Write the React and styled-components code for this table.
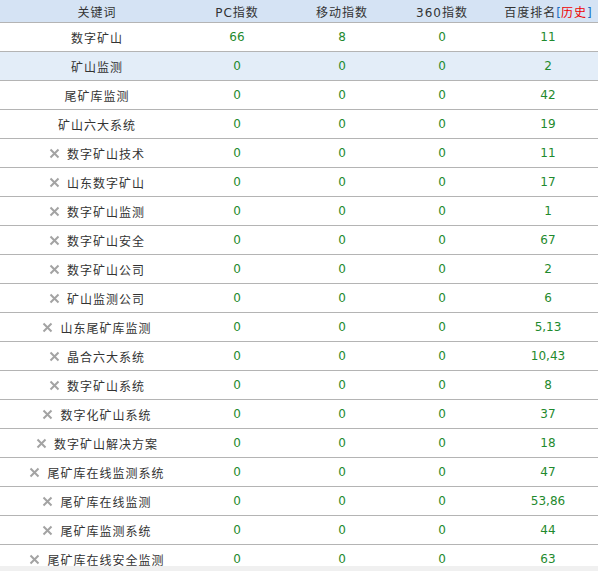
import styled, { createGlobalStyle } from "styled-components";

const GlobalStyle = createGlobalStyle`
  html, body {
    margin: 0;
    padding: 0;
    background: #f0f0f0;
  }
`;

const Frame = styled.div`
  width: 598px;
  height: 566px;
  overflow: hidden;
  background: #fff;
`;

const Table = styled.div`
  width: 616px;
  font-family: "DejaVu Sans", "Noto Sans CJK SC", sans-serif;
  font-size: 12px;
`;

const Row = styled.div`
  display: grid;
  grid-template-columns: 194px 86px 124px 76px 136px;
  height: ${(p) => (p.$head ? "22px" : "28px")};
  border-bottom: 1px solid #b4b4b4;
  background: ${(p) => (p.$head ? "#d5e3f4" : p.$active ? "#e3edf8" : "#fff")};
`;

const Cell = styled.div`
  display: flex;
  align-items: center;
  justify-content: center;
  gap: 7px;
  color: ${(p) => (p.$num ? "#1f8a2e" : "#333")};
`;

const HeadCell = styled(Cell)`
  color: #333;
`;

const Word = styled.span`
  letter-spacing: 1px;
`;

const History = styled.span`
  color: #e00;
`;

const Bracket = styled.span`
  color: #1a6fc4;
  letter-spacing: 0;
`;

const Remove = () => (
  <svg width="11" height="11" viewBox="0 0 11 11">
    <path d="M1.5 1.5 L9.5 9.5 M9.5 1.5 L1.5 9.5" stroke="#a3a3a3" strokeWidth="2" />
  </svg>
);

const rows = [
  ["数字矿山", "66", "8", "0", "11", false],
  ["矿山监测", "0", "0", "0", "2", false],
  ["尾矿库监测", "0", "0", "0", "42", false],
  ["矿山六大系统", "0", "0", "0", "19", false],
  ["数字矿山技术", "0", "0", "0", "11", true],
  ["山东数字矿山", "0", "0", "0", "17", true],
  ["数字矿山监测", "0", "0", "0", "1", true],
  ["数字矿山安全", "0", "0", "0", "67", true],
  ["数字矿山公司", "0", "0", "0", "2", true],
  ["矿山监测公司", "0", "0", "0", "6", true],
  ["山东尾矿库监测", "0", "0", "0", "5,13", true],
  ["晶合六大系统", "0", "0", "0", "10,43", true],
  ["数字矿山系统", "0", "0", "0", "8", true],
  ["数字化矿山系统", "0", "0", "0", "37", true],
  ["数字矿山解决方案", "0", "0", "0", "18", true],
  ["尾矿库在线监测系统", "0", "0", "0", "47", true],
  ["尾矿库在线监测", "0", "0", "0", "53,86", true],
  ["尾矿库监测系统", "0", "0", "0", "44", true],
  ["尾矿库在线安全监测", "0", "0", "0", "63", true],
];

export default function App() {
  return (
    <Frame>
      <GlobalStyle />
      <Table>
        <Row $head>
          <HeadCell><Word>关键词</Word></HeadCell>
          <HeadCell><Word>PC指数</Word></HeadCell>
          <HeadCell><Word>移动指数</Word></HeadCell>
          <HeadCell><Word>360指数</Word></HeadCell>
          <HeadCell>
            <Word>
              百度排名<Bracket>[</Bracket>
              <History>历史</History>
              <Bracket>]</Bracket>
            </Word>
          </HeadCell>
        </Row>
        {rows.map(([kw, pc, mob, s360, rank, removable], i) => (
          <Row key={kw} $active={i === 1}>
            <Cell>
              {removable && <Remove />}
              <Word>{kw}</Word>
            </Cell>
            <Cell $num>{pc}</Cell>
            <Cell $num>{mob}</Cell>
            <Cell $num>{s360}</Cell>
            <Cell $num>{rank}</Cell>
          </Row>
        ))}
      </Table>
    </Frame>
  );
}
